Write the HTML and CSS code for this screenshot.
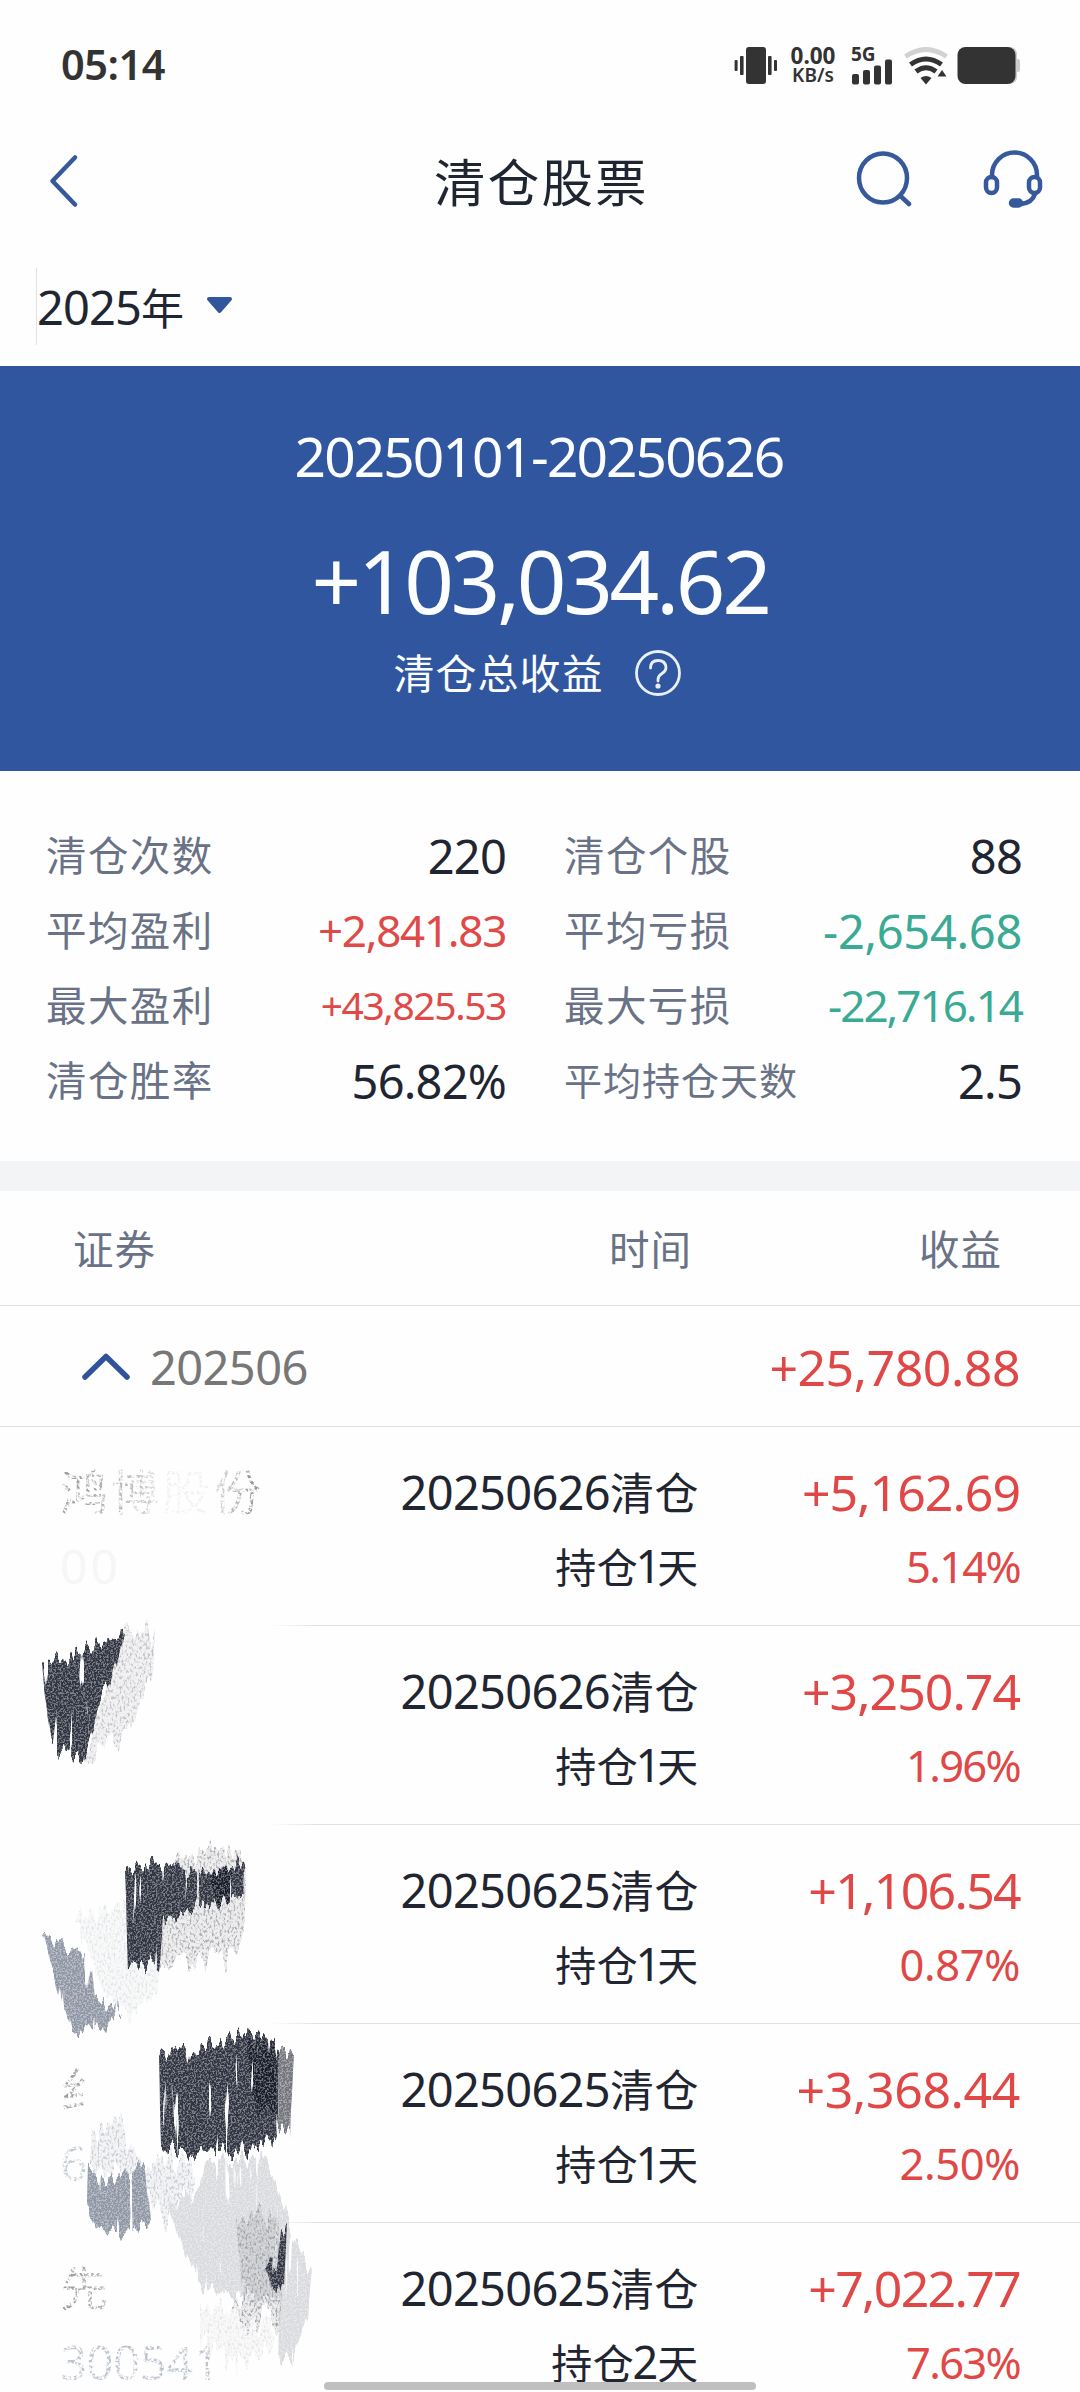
FILE: index.html
```html
<!DOCTYPE html>
<html lang="zh-CN">
<head>
<meta charset="utf-8">
<title>清仓股票</title>
<link rel="stylesheet" href="styles.css">
</head>
<body>
<div class="screen">
  <div class="status">
    <span class="clock">05:14</span>
    <div class="status-icons">
      <svg class="vibrate" width="44" height="38" viewBox="0 0 44 38" fill="#333"><rect x="12" y="0" width="20" height="37" rx="3"/><rect x="6" y="9" width="3.6" height="19" rx="1"/><rect x="34" y="9" width="3.6" height="19" rx="1"/><rect x="0.6" y="13" width="3" height="11" rx="1"/><rect x="40" y="13" width="3" height="11" rx="1"/></svg>
      <div class="speed"><b>0.00</b><span>KB/s</span></div>
      <div class="signal"><b>5G</b>
        <svg width="42" height="26" viewBox="0 0 42 26" fill="#333"><rect x="1" y="15" width="7" height="10.500" rx="2"/><rect x="12" y="11" width="7" height="14.500" rx="2"/><rect x="23" y="6.500" width="7" height="19" rx="2"/><rect x="34" y="0.500" width="7" height="25" rx="2"/></svg>
      </div>
      <svg class="wifi" width="44" height="38" viewBox="0 0 44 38" fill="none" stroke-width="5"><path d="M1.500 9.500Q22-4.500 42.500 9.500" stroke="#d2d2d2"/><path d="M6.500 17.500Q22 6.500 37.500 17.500M12 24.500Q22 17 32 24.500" stroke="#333"/><path d="M16.500 31Q22 27 27.500 31L22 37.500Z" fill="#333"/><path d="M33.500 29.500L38 23L42.500 29.500Z" fill="#333"/></svg>
      <svg class="battery" width="64" height="38" viewBox="0 0 64 38"><path d="M52 0q8 0 8 8v4h1q2 0 2 2v9q0 2-2 2h-1v5q0 7-8 7z" fill="#ccc"/><rect x="0.500" y="0" width="58" height="37" rx="8" fill="#333"/></svg>
    </div>
  </div>
  <div class="nav">
    <svg class="back" width="30" height="54" viewBox="0 0 30 54" fill="none" stroke="#35599b" stroke-width="4.500" stroke-linecap="round" stroke-linejoin="round"><path d="M26 3.500L3.500 27L26 50.500"/></svg>
    <h1>清仓股票</h1>
    <svg class="search" width="56" height="58" viewBox="0 0 56 58" fill="none" stroke="#35599b" stroke-width="4.500" stroke-linecap="round"><ellipse cx="27" cy="28" rx="24" ry="24.500"/><path d="M44.500 46L53 54"/></svg>
    <svg class="service" width="62" height="60" viewBox="0 0 62 60" fill="none" stroke="#35599b" stroke-width="4.500" stroke-linecap="round"><path d="M9 27V25A22.500 22.500 0 0 1 54 25V27"/><rect x="3" y="27" width="11" height="16" rx="5.500"/><rect x="46" y="27" width="11" height="16" rx="5.500"/><path d="M52 44Q49 53 38 54"/><rect x="28" y="50.500" width="10" height="5" rx="2.500" fill="#2f559d"/></svg>
  </div>
  <div class="filter">
    <span>2025<i>年</i></span>
    <svg width="27" height="19" viewBox="0 0 27 19"><path d="M3 3H24L13.500 15Z" fill="#30569e" stroke="#30569e" stroke-width="4" stroke-linejoin="round"/></svg>
  </div>
  <div class="hero">
    <div class="range">20250101-20250626</div>
    <div class="total">+103,034.62</div>
    <div class="caption"><span>清仓总收益</span>
      <svg width="46" height="46" viewBox="0 0 46 46" fill="none" stroke="#e9f0fb" stroke-width="2.800" stroke-linecap="round"><circle cx="23" cy="23" r="21.500"/><path d="M15.500 18Q15.500 10.500 23 10.500T31 17.500Q31 21 27 23.500T23 29.500V31"/><circle cx="23" cy="36" r="1.200" fill="#e9f0fb"/></svg>
    </div>
  </div>
  <div class="stats">
    <div class="stat"><label>清仓次数</label><b>220</b></div>
    <div class="stat"><label>清仓个股</label><b>88</b></div>
    <div class="stat"><label>平均盈利</label><b class="up mid">+2,841.83</b></div>
    <div class="stat"><label>平均亏损</label><b class="down wide">-2,654.68</b></div>
    <div class="stat"><label>最大盈利</label><b class="up small">+43,825.53</b></div>
    <div class="stat"><label>最大亏损</label><b class="down mid narrow">-22,716.14</b></div>
    <div class="stat"><label>清仓胜率</label><b>56.82%</b></div>
    <div class="stat"><label class="long">平均持仓天数</label><b>2.5</b></div>
  </div>
  <div class="band"></div>
  <div class="thead"><span>证券</span><span>时间</span><span>收益</span></div>
  <div class="month">
    <svg width="50" height="30" viewBox="0 0 50 30" fill="none" stroke="#30529a" stroke-width="5.500" stroke-linecap="round" stroke-linejoin="round"><path d="M5 25L26 4.500L47 25"/></svg>
    <span>202506</span><b>+25,780.88</b>
  </div>
  <div class="list">
    <div class="row"><div class="name"><p class="dim">鸿博股份</p><p class="ghost">00</p></div><div class="when"><p>20250626<i>清仓</i></p><p>持仓<em>1</em>天</p></div><div class="gain"><p>+5,162.69</p><p class="narrow">5.14%</p></div></div>
    <div class="row"><div class="name"></div><div class="when"><p>20250626<i>清仓</i></p><p>持仓<em>1</em>天</p></div><div class="gain"><p>+3,250.74</p><p class="narrow">1.96%</p></div></div>
    <div class="row"><div class="name"></div><div class="when"><p>20250625<i>清仓</i></p><p>持仓<em>1</em>天</p></div><div class="gain"><p class="narrow">+1,106.54</p><p class="wide">0.87%</p></div></div>
    <div class="row"><div class="name"><p class="dim">纟</p><p class="faint">6</p></div><div class="when"><p>20250625<i>清仓</i></p><p>持仓<em>1</em>天</p></div><div class="gain"><p class="wide">+3,368.44</p><p class="wide">2.50%</p></div></div>
    <div class="row"><div class="name"><p class="dim">先</p><p class="code">300541</p></div><div class="when"><p>20250625<i>清仓</i></p><p>持仓<em class="two">2</em>天</p></div><div class="gain"><p class="narrow">+7,022.77</p><p class="narrow">7.63%</p></div></div>
    <svg class="scribbles" width="340" height="800" viewBox="0 1600 340 800">
      <defs>
        <filter id="dense" x="-20%" y="-20%" width="140%" height="140%" color-interpolation-filters="sRGB">
          <feTurbulence type="fractalNoise" baseFrequency="0.200 0.014" numOctaves="2" seed="4" result="s"/>
          <feColorMatrix in="s" values="0 0 0 0 0.500  1 0 0 0 0  0 0 0 0 0  0 0 0 0 1" result="shift"/>
          <feDisplacementMap in="SourceGraphic" in2="shift" scale="36" xChannelSelector="R" yChannelSelector="G" result="d"/>
          <feTurbulence type="fractalNoise" baseFrequency="0.550" numOctaves="2" seed="9"/>
          <feColorMatrix values="0 0 0 0 1  0 0 0 0 1  0 0 0 0 1  5 0 0 0 -2.200"/>
          <feComposite in2="d" operator="in"/>
          <feComponentTransfer result="w"><feFuncA type="linear" slope="0.380"/></feComponentTransfer>
          <feMerge result="m"><feMergeNode in="d"/><feMergeNode in="w"/></feMerge>
          <feColorMatrix in="s" values="0 0 0 0 0  0 0 0 0 0  0 0 0 0 0  0 -18 0 0 13.200" result="gap"/>
          <feComposite in="m" in2="gap" operator="in"/>
        </filter>
        <filter id="loose" x="-20%" y="-20%" width="140%" height="140%" color-interpolation-filters="sRGB">
          <feTurbulence type="fractalNoise" baseFrequency="0.160 0.014" numOctaves="2" seed="7" result="s"/>
          <feColorMatrix in="s" values="0 0 0 0 0.500  1 0 0 0 0  0 0 0 0 0  0 0 0 0 1" result="shift"/>
          <feDisplacementMap in="SourceGraphic" in2="shift" scale="60" xChannelSelector="R" yChannelSelector="G" result="d"/>
          <feTurbulence type="fractalNoise" baseFrequency="0.500 0.300" numOctaves="2" seed="3"/>
          <feColorMatrix values="0 0 0 0 0  0 0 0 0 0  0 0 0 0 0  4 0 0 0 -1.900" result="n"/>
          <feComposite in="d" in2="n" operator="in" result="specks"/>
          <feComponentTransfer in="d" result="wash"><feFuncA type="linear" slope="0.200"/></feComponentTransfer>
          <feMerge><feMergeNode in="wash"/><feMergeNode in="specks"/></feMerge>
        </filter>
        <filter id="worn" color-interpolation-filters="sRGB">
          <feTurbulence type="fractalNoise" baseFrequency="0.350" numOctaves="2" seed="5"/>
          <feColorMatrix values="0 0 0 0 0  0 0 0 0 0  0 0 0 0 0  4 0 0 0 -1.600" result="n"/>
          <feComposite in="SourceGraphic" in2="n" operator="in"/>
        </filter>
      </defs>
      <g filter="url(#loose)">
        <path fill="#c3c4ca" d="M112 1640L130 1628L155 1636L152 1670L130 1730L95 1758L82 1755L105 1690Z"/>
        <path fill="#adaeb4" d="M168 1865L215 1845L240 1850L246 1880L244 1935L235 1955L160 1966L155 1920Z"/>
        <path fill="#e3e5e8" d="M75 1920L120 1900L160 1960L158 1990L130 2018L105 1990Z"/>
        <path fill="#c9ccd3" d="M92 2132L120 2118L140 2165L190 2160L195 2190L165 2222L145 2180L90 2170Z"/>
      </g>
      <g filter="url(#dense)">
        <path fill="#d8dadd" d="M205 2165L262 2155L278 2190L295 2240L312 2270L308 2315L292 2360L278 2358L280 2300L225 2292L202 2288L172 2220L168 2205L200 2195Z"/>
        <path fill="#2f3340" d="M42 1658L60 1660L95 1645L125 1634L112 1678L100 1700L94 1725L83 1758L70 1756L51 1745Z"/>
        <path fill="#2f3340" d="M125 1872L150 1863L180 1866L205 1876L246 1863L246 1897L215 1902L185 1912L163 1922L159 1967L128 1962Z"/>
        <path fill="#8f97a5" d="M42 1930L66 1950L92 1960L95 2000L122 2010L105 2028L72 2034L60 1995Z"/>
        <path fill="#2f3340" d="M159 2054L190 2048L245 2034L279 2040L278 2137L245 2150L190 2154L161 2147Z"/>
        <path fill="#72747b" d="M279 2045L294 2053L290 2132L278 2130Z"/>
        <path fill="#8f97a5" d="M88 2168L110 2178L145 2168L151 2222L130 2230L103 2234L87 2212Z"/>
        <path fill="#171b28" d="M248 2045L277 2045L275 2115L252 2105Z"/>
        <path fill="#171b28" d="M210 1875L232 1870L230 1900L218 1912Z"/>
      </g>
      <g filter="url(#loose)">
        <path fill="#a3a5aa" d="M236 2220L255 2213L276 2218L284 2290L280 2322L262 2308L250 2330L222 2330L245 2290L240 2260Z"/>
        <path fill="#e6e7e9" d="M200 2305L275 2325L270 2352L240 2362L200 2340Z"/>
      </g>
      <path filter="url(#dense)" fill="#2f3340" d="M281 2230L287 2235L284 2286L272 2292L265 2262L277 2264Z"/>
    </svg>
  </div>
  <div class="home-bar"></div>
</div>
</body>
</html>
```
FILE: styles.css
```css
* { box-sizing: border-box; }
body { margin: 0; background: #fefefe; }
p, h1 { margin: 0; font-weight: 400; }
i, em { font-style: normal; }
.screen {
  position: relative;
  width: 1080px;
  height: 2392px;
  overflow: hidden;
  background: #fefefe;
  color: #1f2531;
  font-family: "Noto Sans", "Noto Sans CJK SC", sans-serif;
  font-size: 47px;
  line-height: 1;
  white-space: nowrap;
}
.status { display: flex; height: 130px; justify-content: space-between; padding: 44px 59px 0 61px; color: #333; }
.clock { font-size: 41.5px; font-weight: 600; letter-spacing: -0.5px; }
.status-icons { display: flex; padding-top: 3px; }
.vibrate { margin-right: 10px; }
.speed { width: 50px; display: flex; flex-direction: column; align-items: center; margin-right: 13px; }
.speed b { font-size: 22.5px; line-height: 18px; font-weight: 700; }
.speed span { font-size: 19px; line-height: 21px; font-weight: 600; }
.signal { width: 44px; height: 38px; margin-right: 9px; display: grid; }
.signal b, .signal svg { grid-area: 1 / 1; }
.signal b { font-size: 19px; line-height: 15px; font-weight: 700; }
.signal svg { align-self: end; }
.wifi { margin-right: 9px; }
.nav { height: 110px; display: flex; align-items: flex-start; padding: 20px 36px 0 49px; }
.back { margin-top: 4px; }
.nav h1 { flex: 1; margin: 7px 0 0 355px; font-size: 51.5px; letter-spacing: 2.2px; }
.search { margin: 0 71px 0 0; }
.service { margin: 0 -1px 0 0; }
.filter { height: 77px; margin: 28px 0 21px 36px; display: flex; border-left: 1px solid #e2e2e2; }
.filter span { padding-top: 16px; letter-spacing: -0.9px; }
.filter i { font-size: 43px; }
.filter svg { margin: 28px 0 0 23px; }
.hero { height: 405px; background: #30569f; color: #fbfdff; text-align: center; padding-top: 62px; }
.range { font-size: 55px; letter-spacing: -1.9px; margin-right: 2px; }
.total { font-size: 87px; letter-spacing: -3.4px; margin-top: 54px; }
.caption { display: flex; justify-content: center; align-items: center; gap: 31px; margin: 26px 6px 0 0; font-size: 41px; letter-spacing: 1px; height: 46px; }
.stats { height: 390px; padding: 48px 58px 0 46px; display: grid; grid-template-columns: 460px 458px; justify-content: space-between; grid-auto-rows: 75px; }
.stat { display: flex; justify-content: space-between; align-items: center; }
.stat label { color: #697286; font-size: 40.5px; letter-spacing: 1.4px; }
.stat label.long { font-size: 38px; letter-spacing: 1px; margin-bottom: 4px; }
.stat b { font-weight: 400; letter-spacing: -0.8px; }
.stat .mid { font-size: 44px; letter-spacing: -1.3px; margin-bottom: 3px; }
.stat .small { font-size: 39px; letter-spacing: -1.4px; margin-bottom: 4px; }
.stat .wide { letter-spacing: -0.3px; }
.stat .narrow { letter-spacing: -2px; }
.stat .up { color: #df4a48; }
.stat .down { color: #3aaa94; }
.band { height: 30px; background: #f2f4f6; }
.thead { height: 115px; border-bottom: 1px solid #dfe2e3; display: grid; grid-template-columns: 536px 310px 1fr; align-items: center; padding: 4px 0 0 73px; color: #697286; font-size: 40.5px; letter-spacing: 1px; }
.month { height: 121px; border-bottom: 1px solid #dfe2e3; display: flex; align-items: center; padding: 2px 60px 0 80px; }
.month span { color: #777; margin-left: 20px; flex: 1; letter-spacing: -0.6px; }
.month b { font-weight: 400; font-size: 50px; color: #e04847; letter-spacing: -0.5px; }
.list { position: relative; height: 965px; }
.row { height: 199px; display: grid; grid-template-columns: 240px 399px 1fr; padding: 40px 60px 0; background: linear-gradient(to right, transparent 270px, #dfe2e3 315px) bottom / 100% 1px no-repeat; }
.row p { height: 50px; line-height: 50px; }
.row p + p { margin-top: 24px; }
.when, .gain { text-align: right; }
.when p { letter-spacing: -0.7px; }
.when i { font-size: 44px; letter-spacing: 0.5px; }
.when p + p { font-size: 41px; letter-spacing: 0.7px; }
.when em { font-size: 45px; letter-spacing: -4px; margin-left: -3px; }
.when .two { letter-spacing: -1px; margin-left: -2px; }
.gain { color: #e04847; }
.gain p { font-size: 50px; letter-spacing: -1px; }
.gain p + p { font-size: 43.5px; }
.gain p.narrow { letter-spacing: -1.7px; }
.gain p.wide { letter-spacing: -0.4px; }
.name p { font-size: 48px; letter-spacing: 3px; }
.name .dim { color: transparent; background: linear-gradient(to right, #999, #c4c4c4 80px, #f1f1f1 110px, #f1f1f1 145px, #999 190px); -webkit-background-clip: text; background-clip: text; filter: url(#worn); }
.name .ghost { color: #f6f6f7; }
.name .faint { color: #c5cad2; filter: url(#worn); }
.name .code { color: #bcc2cc; font-size: 47px; letter-spacing: -0.3px; filter: url(#worn); }
.scribbles { position: absolute; left: 0; top: 173px; }
.home-bar { position: absolute; left: 324px; top: 2382px; width: 432px; height: 8px; border-radius: 4px; background: #bfbfbf; }
```
